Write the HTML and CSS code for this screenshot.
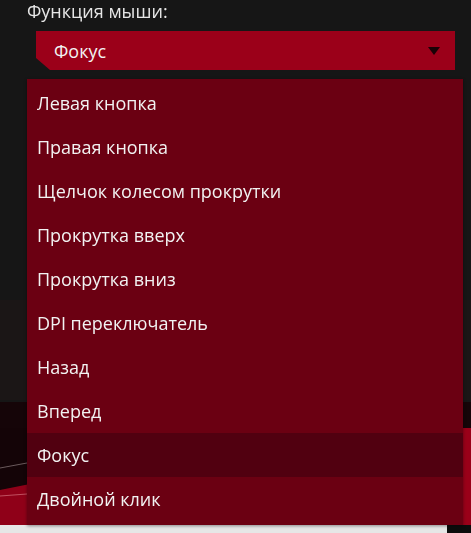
FILE: index.html
```html
<!DOCTYPE html>
<html lang="ru">
<head>
    <meta charset="UTF-8">
    <meta name="viewport" content="width=device-width, initial-scale=1.0">
    <title>Функция мыши</title>
    <link rel="stylesheet" href="styles.css">
</head>
<body>
    <svg class="backdrop" width="471" height="533" viewBox="0 0 471 533">
        <rect width="471" height="533" fill="#161616"/>
        <rect y="300" width="471" height="100" fill="#1b1616"/>
        <polygon points="0,402 471,402 471,428 0,428" fill="#150508"/>
        <polygon points="0,428 40,428 40,486 0,490" fill="#140407"/>
        <line x1="0" y1="468" x2="27" y2="463" stroke="#6a5a5c" stroke-width="1"/>
        <polygon points="0,490 30,484 30,525 0,525" fill="#8f0018"/>
        <line x1="0" y1="496" x2="27" y2="494" stroke="#c05060" stroke-width="1"/>
        <polygon points="440,428 471,428 471,525 440,525" fill="#9a0019"/>
        <rect y="525" width="447" height="8" fill="#e6e6e6"/>
        <rect x="447" y="525" width="24" height="8" fill="#0c0c0c"/>
    </svg>

    <div class="panel">
        <p class="label">Функция мыши:</p>
        <div class="select">
            <span>Фокус</span>
            <span class="arrow"></span>
        </div>
        <ul class="options">
            <li>Левая кнопка</li>
            <li>Правая кнопка</li>
            <li>Щелчок колесом прокрутки</li>
            <li>Прокрутка вверх</li>
            <li>Прокрутка вниз</li>
            <li>DPI переключатель</li>
            <li>Назад</li>
            <li>Вперед</li>
            <li class="active">Фокус</li>
            <li>Двойной клик</li>
        </ul>
    </div>
</body>
</html>
```

FILE: styles.css
```css
:root{
    --bg-color: #161616;
    --red-color: #9b0019;
    --list-color: #6b0012;
    --active-color: #510010;
    --text-color: #f2f2f2;
}
*{
    padding: 0;
    margin: 0;
    box-sizing: border-box;
}
body{
    font-family: 'Open Sans', 'Noto Sans', sans-serif;
    background-color: var(--bg-color);
    color: var(--text-color);
    width: 471px;
    height: 533px;
    overflow: hidden;
}
.backdrop{
    position: fixed;
    top: 0;
    left: 0;
    z-index: -1;
}
.panel{
    padding-left: 27px;
}
.label{
    font-size: 18px;
    line-height: 22px;
    color: #e6e6e6;
    margin-top: 0;
}
.select{
    margin: 9px 0 0 9px;
    width: 419px;
    height: 39px;
    background-color: var(--red-color);
    clip-path: polygon(0 0, 100% 0, 100% 100%, 14px 100%, 0 calc(100% - 12px));
    display: flex;
    align-items: center;
    justify-content: space-between;
    padding: 0 15px 0 18px;
    font-size: 18px;
}
.arrow{
    width: 0;
    height: 0;
    border-left: 6px solid transparent;
    border-right: 6px solid transparent;
    border-top: 8px solid #1a0206;
}
.options{
    list-style: none;
    margin-top: 9px;
    width: 436px;
    padding: 2px 0 4px;
    background-color: var(--list-color);
    box-shadow: 0 1px 3px rgba(0, 0, 0, 0.4);
}
.options li{
    height: 44px;
    line-height: 44px;
    padding-left: 10px;
    font-size: 18px;
}
.options li.active{
    background-color: var(--active-color);
}
```
